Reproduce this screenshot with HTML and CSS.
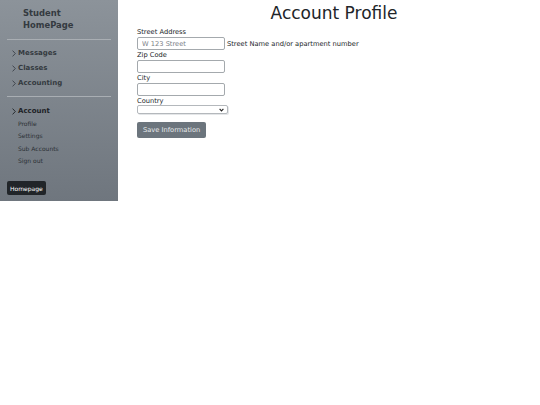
FILE: index.html
```html
<!DOCTYPE html>
<html>
<head>
<meta charset="utf-8">
<link rel="stylesheet" href="styles.css">
</head>
<body>
<div class="page">
  <aside class="sidebar">
    <div class="brand">Student<br>HomePage</div>
    <hr class="divider divider-top">
    <ul class="menu">
      <li class="item"><svg class="chev" width="4" height="7" viewBox="0 0 4 7"><path d="M0.6 0.6 L3.3 3.5 L0.6 6.4" fill="none" stroke="#3a4047" stroke-width="0.9"/></svg>Messages</li>
      <li class="item"><svg class="chev" width="4" height="7" viewBox="0 0 4 7"><path d="M0.6 0.6 L3.3 3.5 L0.6 6.4" fill="none" stroke="#3a4047" stroke-width="0.9"/></svg>Classes</li>
      <li class="item"><svg class="chev" width="4" height="7" viewBox="0 0 4 7"><path d="M0.6 0.6 L3.3 3.5 L0.6 6.4" fill="none" stroke="#3a4047" stroke-width="0.9"/></svg>Accounting</li>
    </ul>
    <hr class="divider divider-mid">
    <ul class="menu">
      <li class="item active"><svg class="chev" width="4" height="7" viewBox="0 0 4 7"><path d="M0.6 0.6 L3.3 3.5 L0.6 6.4" fill="none" stroke="#1d2125" stroke-width="0.9"/></svg>Account</li>
    </ul>
    <ul class="submenu">
      <li>Profile</li>
      <li>Settings</li>
      <li>Sub Accounts</li>
      <li>Sign out</li>
    </ul>
    <button class="home-btn">Homepage</button>
  </aside>
  <main class="main">
    <h1 class="title">Account Profile</h1>
    <form class="form">
      <label class="lbl">Street Address</label>
      <div class="row"><input class="field" placeholder="W 123 Street"><span class="hint">Street Name and/or apartment number</span></div>
      <label class="lbl">Zip Code</label>
      <div class="row"><input class="field"></div>
      <label class="lbl">City</label>
      <div class="row"><input class="field"></div>
      <label class="lbl">Country</label>
      <div class="row sel-wrap"><select class="sel"><option></option></select><svg class="sel-arrow" width="5" height="4" viewBox="0 0 5 4"><path d="M0.6 0.8 L2.5 2.9 L4.4 0.8" fill="none" stroke="#222" stroke-width="1.1"/></svg></div>
      <div class="row"><button type="button" class="save">Save Information</button></div>
    </form>
  </main>
</div>
</body>
</html>
```
FILE: styles.css
```css
* { box-sizing: border-box; }
body { margin: 0; font-family: "DejaVu Sans", sans-serif; color: #212529; background: #fff; }
.page { display: flex; align-items: flex-start; }
.sidebar {
  width: 118px; height: 201px; flex-shrink: 0;
  background: linear-gradient(#8c939a, #6f767e);
  padding: 7px 7px 0 7px;
  display: flex; flex-direction: column;
}
.brand { font-weight: bold; font-size: 8.4px; line-height: 12px; color: #343a40; padding-left: 16px; margin-top: 0; }
.divider { border: 0; border-top: 1px solid #a9aeb3; }
.divider-top { margin: 8px 0 6px; }
.divider-mid { margin: 5px 0 7px; }
.menu { list-style: none; margin: 0; padding: 0; }
.item { font-size: 7px; font-weight: bold; color: #343a40; height: 15px; line-height: 15px; padding-left: 5px; display: flex; align-items: center; }
.item .chev { margin-right: 2px; flex-shrink: 0; }
.item.active { color: #1d2125; }
.submenu { list-style: none; margin: -1px 0 0; padding: 0 0 0 11px; }
.submenu li { font-size: 6px; color: #2b3035; height: 12.3px; line-height: 12.3px; }
.home-btn {
  align-self: flex-start; margin-top: 14px;
  background: #212529; color: #fff; border: 0; border-radius: 2px;
  font-family: "DejaVu Sans", sans-serif; font-size: 6px; padding: 0 3px; height: 14px;
}
.main { flex: 1; padding-left: 19px; }
.title { font-weight: normal; font-size: 17px; margin: 3px 0 4px -9px; text-align: center; color: #212529; line-height: 20px; }
.form { display: flex; flex-direction: column; align-items: flex-start; }
.lbl { font-size: 6.7px; line-height: 10px; }
.row { display: flex; align-items: center; }
.field { width: 88px; height: 13px; border: 1px solid #a4a9ad; border-radius: 2px; font-family: "DejaVu Sans", sans-serif; font-size: 6.7px; padding: 0 4px; background: #fff; }
.field::placeholder { color: #7b8187; }
.hint { font-size: 6.7px; margin-left: 2px; }
.sel-wrap { position: relative; margin-top: -1px; }
.sel { appearance: none; -webkit-appearance: none; width: 91px; height: 9px; font-size: 6px; border: 1px solid #b4b8bc; border-radius: 2px; padding: 0; background: #fff; box-shadow: 1px 1px 0 #e4e6e8; }
.sel-arrow { position: absolute; right: 4px; top: 3px; pointer-events: none; }
.save { margin-top: 8px; background: #6c757d; color: #e8eaec; border: 0; border-radius: 2px; font-family: "DejaVu Sans", sans-serif; font-size: 6.7px; height: 16px; padding: 0 6px; }
```
